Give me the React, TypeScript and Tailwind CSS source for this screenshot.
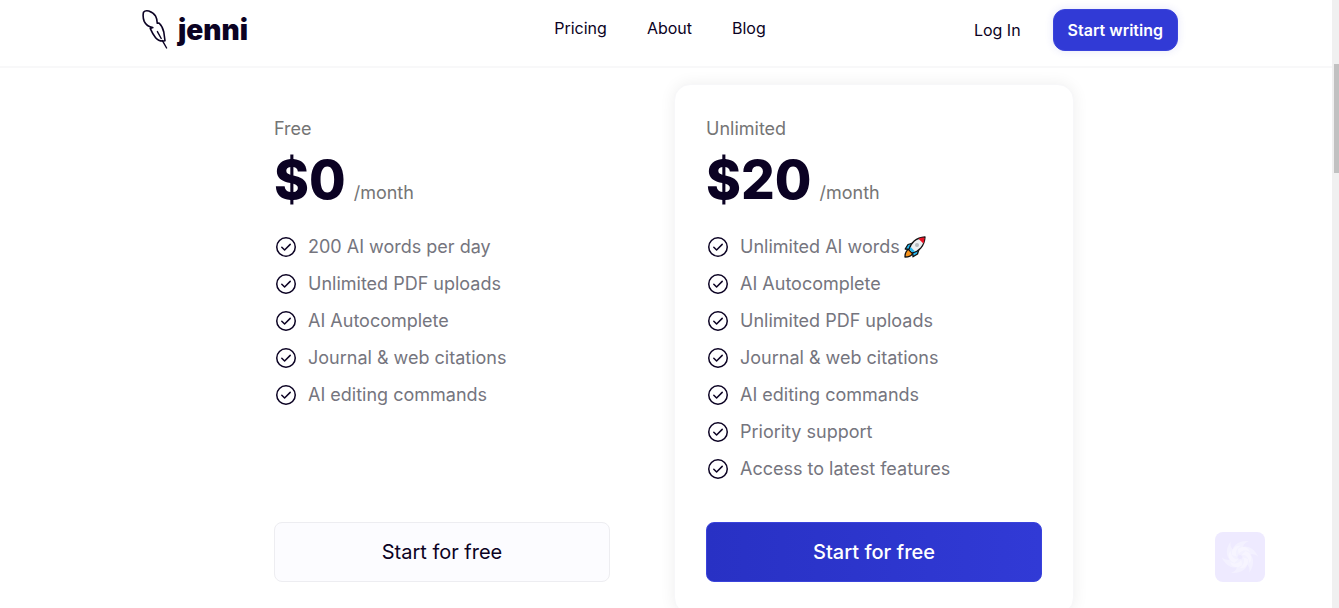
import React from "react";

const INK = "#0b0223";

function Quill() {
  return (
    <svg viewBox="0 0 26 40" className="h-10 w-[26px] shrink-0" fill="none" stroke={INK} strokeWidth="1.6" strokeLinecap="round" strokeLinejoin="round" aria-hidden="true">
      <path d="M1.500 3.200C2.800 1.500 4.800 1.500 6.800 2C10 3 12.300 4.800 13.600 7.200C14.800 9.500 15.300 11.400 15.200 14.300L17 14C19.600 16.400 21 19.400 21.800 23L23 31.800C19 32.500 16 31.600 13.600 28.700C11.300 25.800 9.700 22.800 8.300 19.600L10.800 18.600C6.400 17.800 3.800 15.800 2.200 12.400C1 9.300 .900 6 1.500 3.200Z" />
      <path d="M15.400 22.600L19.200 29.500M20.400 31.600L24.600 39" strokeWidth="1.400" />
    </svg>
  );
}

function CheckIcon() {
  return (
    <svg viewBox="0 0 24 24" className="size-6 shrink-0" fill="none" stroke={INK} strokeWidth="1.5" strokeLinecap="round" strokeLinejoin="round" aria-hidden="true">
      <circle cx="12" cy="12" r="9.25" />
      <path d="M7.800 12.200l2.800 2.800L16.200 9.400" />
    </svg>
  );
}

function Rocket() {
  return (
    <svg viewBox="0 0 22 22" className="size-[22px] shrink-0" strokeLinejoin="round" role="img" aria-label="rocket">
      <path d="M1 21C1 17.500 2 14.500 5 13L9 17C8 19.500 4.500 21 1 21Z" fill="#f7941d" stroke="#111" strokeWidth="1.300" />
      <path d="M9 7L4 8.500L1.200 13L6.500 13.500Z" fill="#26b9f1" stroke="#111" strokeWidth="1.300" />
      <path d="M15 13L13.500 18L9 20.800L8.500 15.500Z" fill="#26b9f1" stroke="#111" strokeWidth="1.300" />
      <path d="M5 14C6.500 7 12 1.500 21 1C20.500 10 15 15.500 8 17Z" fill="#eceef0" stroke="#111" strokeWidth="1.300" />
      <path d="M5.500 13.600L8.200 16.300L11 15.500L6.700 11Z" fill="#26b9f1" />
      <path d="M14.500 2.700C16.500 1.800 18.500 1.500 20.400 1.600C20.500 3.500 20.200 5.500 19.300 7.500Z" fill="#e81224" />
      <circle cx="13" cy="9" r="2" fill="#b5bbc0" />
    </svg>
  );
}

function Swirl() {
  return (
    <svg viewBox="0 0 44 44" className="size-11" fill="#fff" aria-hidden="true">
      {[0, 60, 120, 180, 240, 300].map((angle) => (
        <path key={angle} d="M14 20C13 11 20 5 31 6C27 8 26 9 25 12C29 12 31 14 32 17C26 14 21 16 20 22Z" opacity="0.32" transform={`rotate(${angle} 22 22)`} />
      ))}
    </svg>
  );
}

type PlanProps = { name: string; price: string; features: string[]; featured?: boolean };

function Plan({ name, price, features, featured = false }: PlanProps) {
  return (
    <section
      className={
        featured
          ? "flex flex-col rounded-2xl border border-[#f7f7f9] bg-white px-[31px] pt-8 pb-[31px] shadow-[0_0_16px_rgba(0,0,0,0.07)]"
          : "flex flex-col border border-transparent px-[31px] pt-8 pb-[31px]"
      }
    >
      <h2 className="text-lg leading-6 text-[#757575]">{name}</h2>
      <p className="mt-[11px] flex items-baseline gap-2 text-[#757575]">
        <span className="text-[53px] leading-[56px] font-extrabold text-[#0b0223]">{price}</span>
        <span className="text-lg leading-6">/month</span>
      </p>
      <ul className="mt-[26px] mb-[41px] flex flex-col gap-3">
        {features.map((feature) => (
          <li key={feature} className="flex h-[25px] items-center gap-[10px] text-lg text-[#75757e]">
            <CheckIcon />
            <span className="flex items-center gap-1">
              {feature}
              {feature === "Unlimited AI words" && <Rocket />}
            </span>
          </li>
        ))}
      </ul>
      <button
        type="button"
        className={
          featured
            ? "mt-auto h-[60px] w-full rounded-lg border border-[#3a43dc] bg-linear-to-r from-[#2831c4] to-[#313ad6] text-xl font-medium text-white"
            : "mt-auto h-[60px] w-full rounded-lg border border-[#ededf1] bg-[#fcfcff] text-xl text-[#0b0223]"
        }
      >
        Start for free
      </button>
    </section>
  );
}

const freeFeatures = ["200 AI words per day", "Unlimited PDF uploads", "AI Autocomplete", "Journal & web citations", "AI editing commands"];
const unlimitedFeatures = [
  "Unlimited AI words",
  "AI Autocomplete",
  "Unlimited PDF uploads",
  "Journal & web citations",
  "AI editing commands",
  "Priority support",
  "Access to latest features",
];

export default function App() {
  return (
    <div className="flex h-screen overflow-hidden bg-white font-['Inter',sans-serif] text-[#0b0223]">
      <div className="min-w-0 flex-1">
        <header className="border-b-2 border-[#f8f8f9] pr-3">
          <div className="mx-auto grid h-[66px] max-w-[1036px] grid-cols-[1fr_auto_1fr] items-start">
            <a href="#home" className="flex items-start gap-[10px] pt-[9px]">
              <Quill />
              <span className="text-[28px] leading-[42px] font-black">jenni</span>
            </a>
            <nav className="flex gap-10 pt-4 text-base leading-6">
              <a href="#pricing">Pricing</a>
              <a href="#about">About</a>
              <a href="#blog">Blog</a>
            </nav>
            <div className="flex items-center justify-end gap-8 pt-[9px]">
              <a href="#login">Log In</a>
              <button type="button" className="h-[42px] rounded-xl border border-[#3a43dc] bg-[#313ad6] px-[14px] font-semibold text-white shadow-[0_0_8px_rgba(49,58,214,0.12)]">
                Start writing
              </button>
            </div>
          </div>
        </header>
        <main className="pt-4 pr-4">
          <div className="mx-auto grid max-w-[832px] grid-cols-2 gap-8">
            <Plan name="Free" price="$0" features={freeFeatures} />
            <Plan name="Unlimited" price="$20" features={unlimitedFeatures} featured />
          </div>
        </main>
      </div>
      <button type="button" aria-label="Open assistant" className="fixed right-[74px] bottom-[26px] flex size-[50px] items-center justify-center rounded-lg bg-[#eeeaff]">
        <Swirl />
      </button>
      <div className="flex w-[7px] shrink-0 flex-col items-end bg-[#f0f0f0] pt-16" aria-hidden="true">
        <div className="h-[109px] w-[5px] bg-[#c1c1c1]" />
      </div>
    </div>
  );
}
